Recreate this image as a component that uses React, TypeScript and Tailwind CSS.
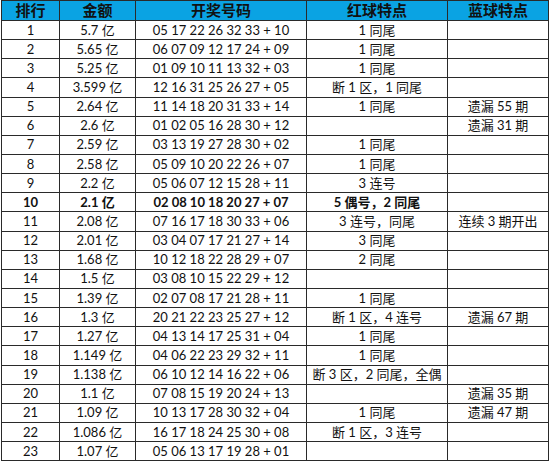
const rows: [string, string, string, string, string, boolean?][] = [
  ["1", "5.7 亿", "05 17 22 26 32 33 + 10", "1 同尾", ""],
  ["2", "5.65 亿", "06 07 09 12 17 24 + 09", "1 同尾", ""],
  ["3", "5.25 亿", "01 09 10 11 13 32 + 03", "1 同尾", ""],
  ["4", "3.599 亿", "12 16 31 25 26 27 + 05", "断 1 区，1 同尾", ""],
  ["5", "2.64 亿", "11 14 18 20 31 33 + 14", "1 同尾", "遗漏 55 期"],
  ["6", "2.6 亿", "01 02 05 16 28 30 + 12", "", "遗漏 31 期"],
  ["7", "2.59 亿", "03 13 19 27 28 30 + 02", "1 同尾", ""],
  ["8", "2.58 亿", "05 09 10 20 22 26 + 07", "1 同尾", ""],
  ["9", "2.2 亿", "05 06 07 12 15 28 + 11", "3 连号", ""],
  ["10", "2.1 亿", "02 08 10 18 20 27 + 07", "5 偶号，2 同尾", "", true],
  ["11", "2.08 亿", "07 16 17 18 30 33 + 06", "3 连号，同尾", "连续 3 期开出"],
  ["12", "2.01 亿", "03 04 07 17 21 27 + 14", "3 同尾", ""],
  ["13", "1.68 亿", "10 12 18 22 28 29 + 07", "2 同尾", ""],
  ["14", "1.5 亿", "03 08 10 15 22 29 + 12", "", ""],
  ["15", "1.39 亿", "02 07 08 17 21 28 + 11", "1 同尾", ""],
  ["16", "1.3 亿", "20 21 22 23 25 27 + 12", "断 1 区，4 连号", "遗漏 67 期"],
  ["17", "1.27 亿", "04 13 14 17 25 31 + 04", "1 同尾", ""],
  ["18", "1.149 亿", "04 06 22 23 29 32 + 11", "1 同尾", ""],
  ["19", "1.138 亿", "06 10 12 14 16 22 + 06", "断 3 区，2 同尾，全偶", ""],
  ["20", "1.1 亿", "07 08 15 19 20 24 + 13", "", "遗漏 35 期"],
  ["21", "1.09 亿", "10 13 17 28 30 32 + 04", "1 同尾", "遗漏 47 期"],
  ["22", "1.086 亿", "16 17 18 24 25 30 + 08", "断 1 区，3 连号", ""],
  ["23", "1.07 亿", "05 06 13 17 19 28 + 01", "", ""],
];

const headers = ["排行", "金额", "开奖号码", "红球特点", "蓝球特点"];
const widths = ["w-[58px]", "w-[76px]", "w-[171px]", "w-[141px]", "w-[101px]"];

export default function App() {
  return (
    <div className="w-[550px] h-[462px] bg-white overflow-hidden font-['Lato','Noto_Sans_CJK_SC',sans-serif] text-[13px] text-[#111]">
      <table className="border-collapse table-fixed ml-px">
        <thead>
          <tr className="h-[20px] bg-[#0aa3e3]">
            {headers.map((h, i) => (
              <th
                key={h}
                className={`${widths[i]} border border-[#2a2a2a] p-0 text-center font-bold text-[15px] leading-none text-[#111]`}
              >
                {h}
              </th>
            ))}
          </tr>
        </thead>
        <tbody>
          {rows.map((r) => (
            <tr key={r[0]} className={`h-[19.15px] ${r[5] ? "font-bold" : ""}`}>
              {r.slice(0, 5).map((c, i) => (
                <td
                  key={i}
                  className="border border-[#2a2a2a] p-0 text-center leading-none whitespace-nowrap"
                >
                  {c as string}
                </td>
              ))}
            </tr>
          ))}
        </tbody>
      </table>
    </div>
  );
}
